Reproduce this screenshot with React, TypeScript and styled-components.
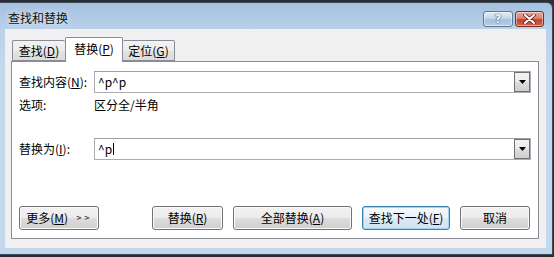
import styled, { createGlobalStyle } from 'styled-components';

const GlobalStyle = createGlobalStyle`
  html, body {
    margin: 0;
    padding: 0;
    background: #2b2f33;
    overflow: hidden;
  }
  body {
    font-family: "Noto Sans CJK SC", "Noto Sans", sans-serif;
    font-size: 12px;
    color: #000;
  }
`;

const Window = styled.div`
  box-sizing: border-box;
  margin-top: 2px;
  width: 553px;
  height: 253px;
  border-top: 1px solid #3d4a58;
  border-right: 1px solid #3d4a58;
  border-bottom: 1px solid #3d4a58;
  border-top-right-radius: 6px;
  background: linear-gradient(to bottom, #a5c1df 0px, #bad1ea 26px, #c3d8ed 60px, #c3d8ed 100%);
  padding: 0 6px 6px 5px;
  display: flex;
  flex-direction: column;
`;

const TitleBar = styled.div`
  height: 26px;
  display: flex;
  align-items: flex-start;
  justify-content: space-between;
  padding: 0 2px 0 3px;
`;

const Title = styled.div`
  margin-top: 8px;
  line-height: 14px;
  font-size: 12px;
  color: #111;
  text-shadow: 0 0 6px rgba(255, 255, 255, 0.9);
`;

const CaptionButtons = styled.div`
  margin-top: 8px;
  display: flex;
  gap: 2px;
`;

const CaptionButton = styled.div<{ $close?: boolean }>`
  box-sizing: border-box;
  width: ${({ $close }) => ($close ? '29px' : '30px')};
  height: 16px;
  border: 1px solid ${({ $close }) => ($close ? '#7d2b22' : '#5f7795')};
  border-radius: 3px;
  background: ${({ $close }) =>
    $close
      ? 'linear-gradient(to bottom, #e9a99b 0%, #d9826f 45%, #c2432d 55%, #d0644b 100%)'
      : 'linear-gradient(to bottom, #e3ecf6 0%, #c5d6ea 45%, #a6bfdb 55%, #b9cfe6 100%)'};
  box-shadow: inset 0 0 0 1px rgba(255, 255, 255, 0.45);
  display: flex;
  align-items: center;
  justify-content: center;
`;

const HelpGlyph = styled.span`
  font-family: "DejaVu Sans", sans-serif;
  font-weight: bold;
  font-size: 12px;
  line-height: 12px;
  color: #f4f7fb;
  text-shadow: 0 0 1px #4a5d74, 0 0 1px #4a5d74, 0 0 1px #4a5d74;
`;

const Client = styled.div`
  flex: 1;
  background: #f0f0f0;
  padding: 8px 7px 8px 6px;
  display: flex;
  flex-direction: column;
`;

const TabRow = styled.div`
  height: 24px;
  padding-left: 1px;
  display: flex;
  align-items: flex-end;
  position: relative;
  z-index: 1;
`;

const Tab = styled.div<{ $active?: boolean; $w: number }>`
  box-sizing: border-box;
  width: ${({ $w }) => $w}px;
  height: ${({ $active }) => ($active ? '25px' : '21px')};
  margin-bottom: ${({ $active }) => ($active ? '-1px' : '0')};
  border: 1px solid #898c95;
  border-bottom: ${({ $active }) => ($active ? 'none' : '1px solid #898c95')};
  border-left: ${({ $active }) => ($active ? '1px solid #898c95' : 'none')};
  border-right: ${({ $active }) => ($active ? '1px solid #898c95' : 'none')};
  border-radius: 2px 2px 0 0;
  background: ${({ $active }) =>
    $active ? '#fff' : 'linear-gradient(to bottom, #f3f3f3 0%, #ececec 50%, #e3e3e3 51%, #dcdcdc 100%)'};
  display: flex;
  align-items: center;
  justify-content: center;
  padding-bottom: ${({ $active }) => ($active ? '3px' : '0')};
  line-height: 14px;

  &:first-child {
    border-left: 1px solid #898c95;
  }
  &:last-child {
    border-right: 1px solid #898c95;
  }
`;

const Panel = styled.div`
  box-sizing: border-box;
  height: 178px;
  background: #fff;
  border: 1px solid #898c95;
  padding: 9px 7px 8px 7px;
  display: flex;
  flex-direction: column;
`;

const FieldRow = styled.div<{ $top?: number }>`
  display: grid;
  grid-template-columns: 75px 1fr;
  align-items: center;
  margin-top: ${({ $top }) => $top ?? 0}px;
`;

const Label = styled.div`
  line-height: 14px;
`;

const Combo = styled.div`
  box-sizing: border-box;
  height: 22px;
  border: 1px solid #abadb3;
  border-top-color: #a0a0a0;
  display: flex;
  align-items: center;
  padding: 0 0 0 3px;
  background: #fff;
`;

const ComboText = styled.div`
  flex: 1;
  font-size: 12px;
  line-height: 14px;
  display: flex;
  align-items: center;
`;

const Caret = styled.span`
  display: inline-block;
  width: 1px;
  height: 12px;
  background: #000;
  margin-left: 1px;
`;

const DropButton = styled.div`
  box-sizing: border-box;
  width: 16px;
  height: 20px;
  border: 1px solid #707070;
  background: linear-gradient(to bottom, #f2f2f2 0%, #ebebeb 50%, #dddddd 51%, #cfcfcf 100%);
  display: flex;
  align-items: center;
  justify-content: center;
`;

const OptionsRow = styled.div`
  display: grid;
  grid-template-columns: 75px 1fr;
  height: 18px;
  align-items: center;
  margin-top: 3px;
`;

const Spacer = styled.div`
  flex: 1;
`;

const ButtonRow = styled.div`
  display: flex;
  align-items: center;
  height: 24px;
`;

const RightButtons = styled.div`
  margin-left: auto;
  margin-right: 1px;
  display: flex;
  gap: 10px;
`;

const Button = styled.div<{ $w: number; $default?: boolean }>`
  box-sizing: border-box;
  width: ${({ $w }) => $w}px;
  height: 24px;
  border: 1px solid ${({ $default }) => ($default ? '#3c7fb1' : '#707070')};
  border-radius: 3px;
  background: ${({ $default }) =>
    $default
      ? 'linear-gradient(to bottom, #f5fafd 0%, #eaf3fa 50%, #dde9f3 51%, #d3e3f0 100%)'
      : 'linear-gradient(to bottom, #f2f2f2 0%, #ebebeb 50%, #dddddd 51%, #cfcfcf 100%)'};
  box-shadow: inset 0 0 0 1px ${({ $default }) => ($default ? '#9fd3f3' : '#fbfbfb')};
  display: flex;
  align-items: center;
  justify-content: center;
  line-height: 14px;
  font-size: 12px;
`;

const Chevrons = styled.span`
  margin-left: 8px;
  font-family: "DejaVu Sans", sans-serif;
  font-size: 7px;
  font-weight: bold;
  letter-spacing: 2px;
  color: #333;
`;

const Arrow = () => (
  <svg width="7" height="4" viewBox="0 0 7 4">
    <path d="M0 0 H7 L3.5 4 Z" fill="#000" />
  </svg>
);

const CloseGlyph = () => (
  <svg width="13" height="10" viewBox="0 0 13 10">
    <path
      d="M2 1 L11 9 M11 1 L2 9"
      stroke="#6b1e16"
      strokeWidth="3.6"
      strokeLinecap="round"
    />
    <path d="M2 1 L11 9 M11 1 L2 9" stroke="#fff" strokeWidth="2" strokeLinecap="round" />
  </svg>
);

const App = (): JSX.Element => {
  return (
    <>
      <GlobalStyle />
      <Window>
        <TitleBar>
          <Title>查找和替换</Title>
          <CaptionButtons>
            <CaptionButton>
              <HelpGlyph>?</HelpGlyph>
            </CaptionButton>
            <CaptionButton $close>
              <CloseGlyph />
            </CaptionButton>
          </CaptionButtons>
        </TitleBar>

        <Client>
          <TabRow>
            <Tab $w={53}>
              查找(<u>D</u>)
            </Tab>
            <Tab $w={58} $active>
              替换(<u>P</u>)
            </Tab>
            <Tab $w={52}>
              定位(<u>G</u>)
            </Tab>
          </TabRow>

          <Panel>
            <FieldRow>
              <Label>
                查找内容(<u>N</u>):
              </Label>
              <Combo>
                <ComboText>^p^p</ComboText>
                <DropButton>
                  <Arrow />
                </DropButton>
              </Combo>
            </FieldRow>

            <OptionsRow>
              <Label>选项:</Label>
              <Label>区分全/半角</Label>
            </OptionsRow>

            <FieldRow $top={24}>
              <Label>
                替换为(<u>I</u>):
              </Label>
              <Combo>
                <ComboText>
                  ^p
                  <Caret />
                </ComboText>
                <DropButton>
                  <Arrow />
                </DropButton>
              </Combo>
            </FieldRow>

            <Spacer />

            <ButtonRow>
              <Button $w={80}>
                更多(<u>M</u>)<Chevrons>&gt;&gt;</Chevrons>
              </Button>
              <RightButtons>
                <Button $w={71}>
                  替换(<u>R</u>)
                </Button>
                <Button $w={119}>
                  全部替换(<u>A</u>)
                </Button>
                <Button $w={88} $default>
                  查找下一处(<u>F</u>)
                </Button>
                <Button $w={70}>取消</Button>
              </RightButtons>
            </ButtonRow>
          </Panel>
        </Client>
      </Window>
    </>
  );
};

export default App;
